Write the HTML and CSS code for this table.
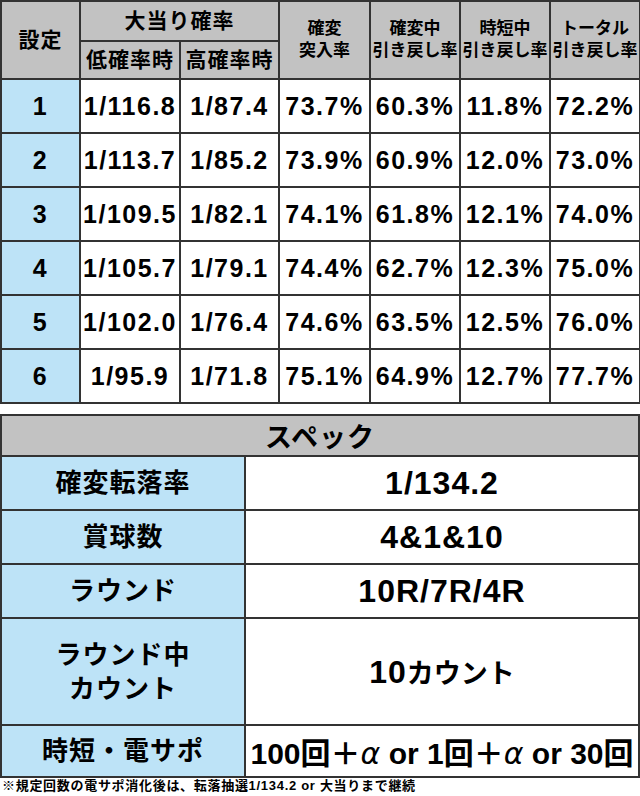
FILE: index.html
```html
<!DOCTYPE html>
<html lang="ja">
<head>
<meta charset="utf-8">
<title>スペック</title>
<link rel="stylesheet" href="styles.css">
</head>
<body>
<table class="rate">
  <colgroup>
    <col class="c-set"><col class="c-low"><col class="c-high"><col class="c-w91"><col class="c-w90"><col class="c-w90"><col class="c-w90">
  </colgroup>
  <thead>
    <tr class="h1">
      <th rowspan="2" class="big">設定</th>
      <th colspan="2" class="big">大当り確率</th>
      <th rowspan="2" class="small">確変<br>突入率</th>
      <th rowspan="2" class="small">確変中<br>引き戻し率</th>
      <th rowspan="2" class="small">時短中<br>引き戻し率</th>
      <th rowspan="2" class="small">トータル<br>引き戻し率</th>
    </tr>
    <tr class="h2">
      <th class="big">低確率時</th>
      <th class="big">高確率時</th>
    </tr>
  </thead>
  <tbody>
    <tr><th class="set">1</th><td>1/116.8</td><td>1/87.4</td><td>73.7%</td><td>60.3%</td><td>11.8%</td><td>72.2%</td></tr>
    <tr><th class="set">2</th><td>1/113.7</td><td>1/85.2</td><td>73.9%</td><td>60.9%</td><td>12.0%</td><td>73.0%</td></tr>
    <tr><th class="set">3</th><td>1/109.5</td><td>1/82.1</td><td>74.1%</td><td>61.8%</td><td>12.1%</td><td>74.0%</td></tr>
    <tr><th class="set">4</th><td>1/105.7</td><td>1/79.1</td><td>74.4%</td><td>62.7%</td><td>12.3%</td><td>75.0%</td></tr>
    <tr><th class="set">5</th><td>1/102.0</td><td>1/76.4</td><td>74.6%</td><td>63.5%</td><td>12.5%</td><td>76.0%</td></tr>
    <tr><th class="set">6</th><td>1/95.9</td><td>1/71.8</td><td>75.1%</td><td>64.9%</td><td>12.7%</td><td>77.7%</td></tr>
  </tbody>
</table>

<table class="spec">
  <colgroup><col class="c-label"><col class="c-value"></colgroup>
  <thead>
    <tr class="sh"><th colspan="2">スペック</th></tr>
  </thead>
  <tbody>
    <tr class="r54"><th>確変転落率</th><td>1/134.2</td></tr>
    <tr class="r54"><th>賞球数</th><td>4&amp;1&amp;10</td></tr>
    <tr class="r54"><th>ラウンド</th><td>10R/7R/4R</td></tr>
    <tr class="r108"><th>ラウンド中<br>カウント</th><td>10<span class="kana">カウント</span></td></tr>
    <tr class="r53"><th>時短・電サポ</th><td class="long">100回＋<i>α</i> or 1回＋<i>α</i> or 30回</td></tr>
  </tbody>
</table>
<p class="note">※規定回数の電サポ消化後は、転落抽選1/134.2 or 大当りまで継続</p>
</body>
</html>
```
FILE: styles.css
```css
html, body {
  margin: 0;
  padding: 0;
  background: #ffffff;
}
body {
  width: 640px;
  font-family: "Liberation Sans", "Noto Sans CJK JP", sans-serif;
  font-weight: bold;
  color: #000;
}
table {
  border-collapse: collapse;
  table-layout: fixed;
  width: 640px;
}
th, td {
  border: 2px solid #333;
  padding: 0;
  text-align: center;
  vertical-align: middle;
}
.c-set { width: 79px; }
.c-low { width: 100px; }
.c-high { width: 99px; }
.c-w91 { width: 91px; }
.c-w90 { width: 90px; }

.rate thead th {
  background: #c2c2c2;
  font-weight: bold;
}
.rate .h1 { height: 40px; }
.rate .h2 { height: 38px; }
.rate .big {
  font-size: 21px;
  line-height: 26px;
  letter-spacing: 1px;
}
.rate .small {
  font-size: 17px;
  line-height: 22px;
  white-space: nowrap;
  letter-spacing: 0;
}
.rate tbody tr { height: 54px; }
.rate tbody td, .rate tbody th {
  font-size: 25px;
  letter-spacing: 1.5px;
  white-space: nowrap;
}
.rate .set {
  background: #bde3f7;
  font-weight: bold;
}

.spec {
  margin-top: 10px;
}
.c-label { width: 244px; }
.spec .sh { height: 40px; }
.spec .sh th {
  background: #c2c2c2;
  font-size: 27px;
  letter-spacing: 1px;
}
.spec tbody th {
  background: #bde3f7;
  font-size: 26px;
  line-height: 34px;
  letter-spacing: 1px;
}
.spec tbody td {
  font-size: 32px;
  letter-spacing: 1px;
  white-space: nowrap;
}
.spec .kana {
  font-size: 27px;
  letter-spacing: 0;
}
.spec .long {
  font-size: 30px;
  letter-spacing: 0;
}
.spec i {
  font-family: "DejaVu Sans", sans-serif;
  font-style: italic;
  font-weight: normal;
}
.r54 { height: 54px; }
.r108 { height: 107px; }
.r53 { height: 52px; }

.note {
  margin: 0;
  padding: 0 0 0 2px;
  font-size: 13px;
  line-height: 16px;
  letter-spacing: 0.7px;
  white-space: nowrap;
}
```
